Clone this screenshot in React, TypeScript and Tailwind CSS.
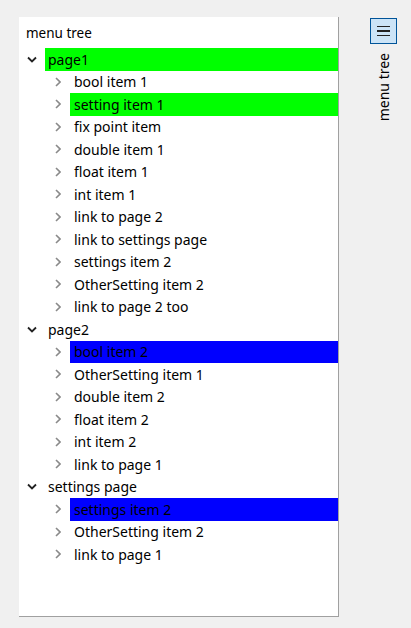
import React from 'react';

type Child = { label: string; hl?: 'green' | 'blue' };
type Page = { label: string; hl?: 'green' | 'blue'; children: Child[] };

const pages: Page[] = [
  {
    label: 'page1',
    hl: 'green',
    children: [
      { label: 'bool item 1' },
      { label: 'setting item 1', hl: 'green' },
      { label: 'fix point item' },
      { label: 'double item 1' },
      { label: 'float item 1' },
      { label: 'int item 1' },
      { label: 'link to page 2' },
      { label: 'link to settings page' },
      { label: 'settings item 2' },
      { label: 'OtherSetting item 2' },
      { label: 'link to page 2 too' },
    ],
  },
  {
    label: 'page2',
    children: [
      { label: 'bool item 2', hl: 'blue' },
      { label: 'OtherSetting item 1' },
      { label: 'double item 2' },
      { label: 'float item 2' },
      { label: 'int item 2' },
      { label: 'link to page 1' },
    ],
  },
  {
    label: 'settings page',
    children: [
      { label: 'settings item 2', hl: 'blue' },
      { label: 'OtherSetting item 2' },
      { label: 'link to page 1' },
    ],
  },
];

const hlClass = (hl?: 'green' | 'blue') =>
  hl === 'green' ? 'bg-[#00ff00]' : hl === 'blue' ? 'bg-[#0000ff]' : '';

function ChevronDown() {
  return (
    <svg width="10" height="7" viewBox="0 0 10 7" className="shrink-0">
      <path d="M1 1.5 L5 5.5 L9 1.5" fill="none" stroke="#222" strokeWidth="1.8" />
    </svg>
  );
}

function ChevronRight() {
  return (
    <svg width="6" height="10" viewBox="0 0 6 10" className="shrink-0">
      <path d="M1 1 L5 5 L1 9" fill="none" stroke="#8a8a8a" strokeWidth="1.6" />
    </svg>
  );
}

export default function App() {
  return (
    <div
      className="w-[411px] h-[628px] bg-[#f0f0f0] flex text-[#000] overflow-hidden"
      style={{ fontFamily: '"Noto Sans", "Open Sans", sans-serif' }}
    >
      <div className="ml-[19px] mt-[17px] w-[320px] h-[600px] bg-white border-r border-b border-[#a0a0a0] flex flex-col">
        <div className="h-[31px] pl-[7px] pt-[2px] flex items-center text-[13.5px]">menu tree</div>
        <ul className="flex flex-col text-[14px]">
          {pages.map((p) => (
            <li key={p.label} className="flex flex-col">
              <div className="h-[22.5px] flex items-center">
                <div className="w-[26px] pl-[8px] flex items-center">
                  <ChevronDown />
                </div>
                <div className={`flex-1 h-full flex items-center pl-[3px] ${hlClass(p.hl)}`}>{p.label}</div>
              </div>
              {p.children.map((c, i) => (
                <div key={i} className="h-[22.5px] flex items-center">
                  <div className="w-[51px] pl-[36px] flex items-center">
                    <ChevronRight />
                  </div>
                  <div className={`flex-1 h-full flex items-center pl-[4px] ${hlClass(c.hl)}`}>{c.label}</div>
                </div>
              ))}
            </li>
          ))}
        </ul>
      </div>
      <div className="ml-[31px] mt-[18px] flex flex-col items-center w-[27px]">
        <button className="w-[27px] h-[26px] bg-[#cce4f7] border border-[#005499] flex flex-col items-center justify-center gap-[3px]">
          <span className="block w-[13px] h-[1.5px] bg-[#222]" />
          <span className="block w-[13px] h-[1.5px] bg-[#222]" />
          <span className="block w-[13px] h-[1.5px] bg-[#222]" />
        </button>
        <div className="mt-[9px] text-[14px] leading-none [writing-mode:vertical-rl] rotate-180">menu tree</div>
      </div>
    </div>
  );
}
